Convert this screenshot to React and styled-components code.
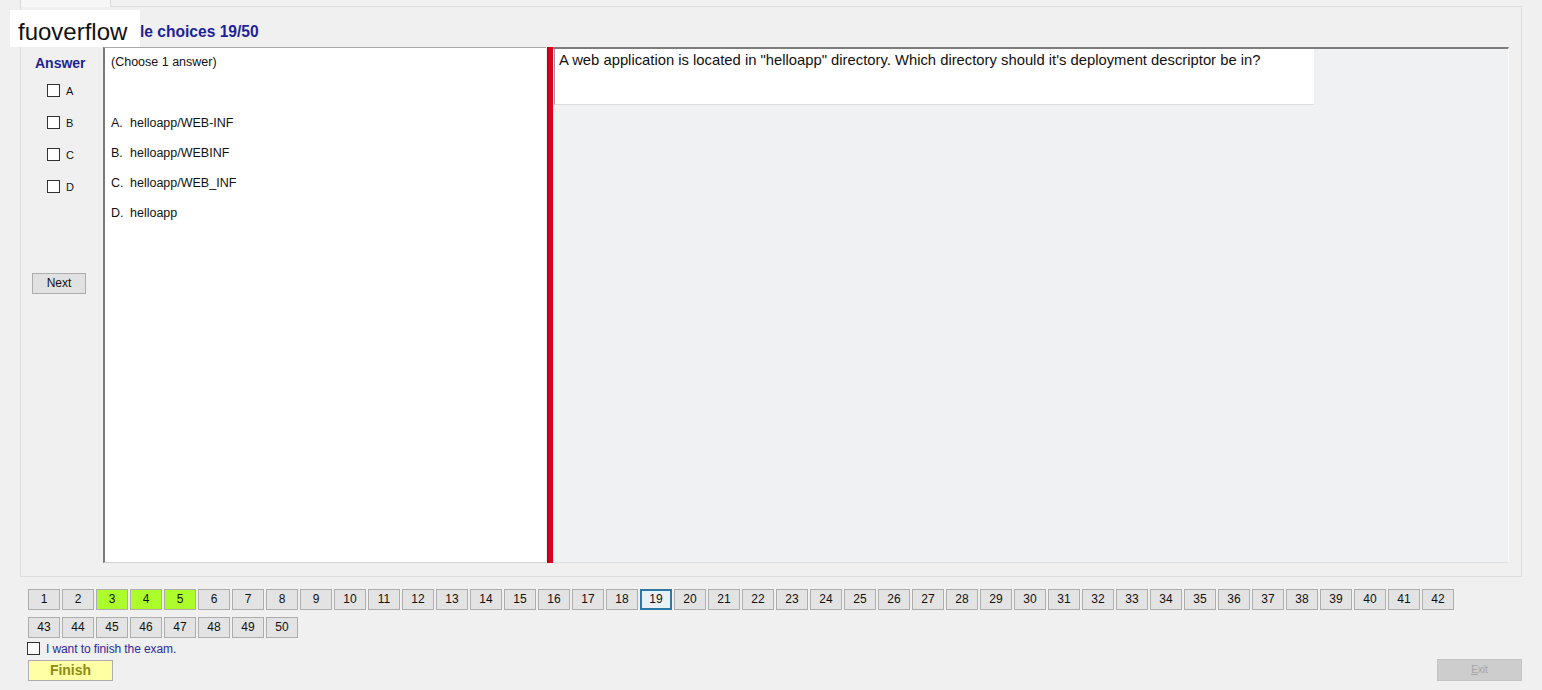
import React from "react"
import styled, { createGlobalStyle } from "styled-components"

const GlobalStyle = createGlobalStyle`
  html, body {
    margin: 0;
    padding: 0;
    background: #f0f0f0;
  }
  body {
    font-family: "Liberation Sans", Arial, sans-serif;
  }
`

const options = [
  { key: "A", text: "helloapp/WEB-INF" },
  { key: "B", text: "helloapp/WEBINF" },
  { key: "C", text: "helloapp/WEB_INF" },
  { key: "D", text: "helloapp" },
]

const done = [3, 4, 5]
const current = 19
const rows = [
  Array.from({ length: 42 }, (_, i) => i + 1),
  Array.from({ length: 8 }, (_, i) => i + 43),
]

const App = () => {
  return (
    <Window>
      <GlobalStyle />
      <TabStrip>
        <Tab />
        <TabRest />
      </TabStrip>
      <Panel>
        <Title>Multiple choices 19/50</Title>
        <Body>
          <LeftCol>
            <AnswerLabel>Answer</AnswerLabel>
            {options.map((o) => (
              <CheckRow key={o.key}>
                <Box />
                <span>{o.key}</span>
              </CheckRow>
            ))}
            <NextButton>Next</NextButton>
          </LeftCol>
          <AnswerPane>
            <Hint>(Choose 1 answer)</Hint>
            {options.map((o) => (
              <Option key={o.key}>
                <span>{o.key}.</span>
                {o.text}
              </Option>
            ))}
          </AnswerPane>
          <Splitter />
          <QuestionPane>
            <QuestionBox>
              A web application is located in "helloapp" directory. Which directory should it's deployment descriptor be in?
            </QuestionBox>
          </QuestionPane>
        </Body>
      </Panel>
      <Nav>
        {rows.map((row, r) => (
          <NavRow key={r}>
            {row.map((n) => (
              <NumButton
                key={n}
                $done={done.includes(n)}
                $current={n === current}
              >
                {n}
              </NumButton>
            ))}
          </NavRow>
        ))}
        <FinishCheck>
          <Box />
          <span>I want to finish the exam.</span>
        </FinishCheck>
        <Footer>
          <FinishButton>Finish</FinishButton>
          <ExitButton>
            <u>E</u>xit
          </ExitButton>
        </Footer>
      </Nav>
      <Watermark>fuoverflow</Watermark>
    </Window>
  )
}

export default App

const Window = styled.div`
  position: relative;
  width: 1542px;
  height: 690px;
  background: #f0f0f0;
  overflow: hidden;
`

const TabStrip = styled.div`
  display: flex;
  margin-left: 20px;
  width: 1502px;
  height: 7px;
`

const Tab = styled.div`
  width: 89px;
  border-left: 1px solid #d9d9d9;
  border-right: 1px solid #d9d9d9;
  background: #f7f7f7;
`

const TabRest = styled.div`
  flex: 1;
  border-bottom: 1px solid #dcdcdc;
`

const Panel = styled.div`
  box-sizing: border-box;
  margin-left: 20px;
  width: 1502px;
  height: 570px;
  padding: 17px 12px 0 0;
  border: 1px solid #dcdcdc;
  border-top: none;
  background: #f0f0f0;
`

const Title = styled.div`
  height: 16px;
  margin-left: 73px;
  font-size: 15.6px;
  line-height: 16px;
  font-weight: bold;
  color: #1f1f9c;
`

const Body = styled.div`
  display: flex;
  margin-top: 7px;
  height: 516px;
`

const LeftCol = styled.div`
  width: 82px;
  display: flex;
  flex-direction: column;
  align-items: flex-start;
`

const AnswerLabel = styled.div`
  margin: 8px 0 0 14px;
  font-size: 14px;
  line-height: 16px;
  font-weight: bold;
  color: #1f1f9c;
`

const Box = styled.span`
  display: inline-block;
  box-sizing: border-box;
  width: 13px;
  height: 13px;
  border: 1px solid #333;
  background: #fff;
`

const CheckRow = styled.div`
  display: flex;
  align-items: center;
  gap: 6px;
  margin-left: 26px;
  height: 13px;
  margin-top: 19px;
  font-size: 11px;
  color: #111;
  &:nth-of-type(2) {
    margin-top: 13px;
  }
`

const NextButton = styled.div`
  box-sizing: border-box;
  margin: 80px 0 0 11px;
  width: 54px;
  height: 21px;
  border: 1px solid #adadad;
  background: #e1e1e1;
  font-size: 12px;
  line-height: 19px;
  text-align: center;
  color: #111;
`

const AnswerPane = styled.div`
  box-sizing: border-box;
  width: 443px;
  padding: 6px 0 0 6px;
  background: #fff;
  border-left: 2px solid #7a7a7a;
  border-top: 1px solid #a9a9a9;
  border-bottom: 1px solid #d0d0d0;
`

const Hint = styled.div`
  font-size: 12.5px;
  line-height: 16px;
  color: #111;
  margin-bottom: 45px;
`

const Option = styled.div`
  font-size: 12.5px;
  line-height: 16px;
  color: #111;
  height: 30px;
  span {
    display: inline-block;
    width: 19px;
  }
`

const Splitter = styled.div`
  width: 6px;
  margin-left: 1px;
  background: #d8001c;
  border-left: 1px solid #a80014;
  box-sizing: border-box;
`

const QuestionPane = styled.div`
  flex: 1;
  background: #eff1f2;
  border-top: 2px solid #7d7d7d;
  border-right: 1px solid #fafafa;
  border-bottom: 1px solid #e0e0e0;
`

const QuestionBox = styled.div`
  box-sizing: border-box;
  width: 760px;
  height: 56px;
  margin-left: 1px;
  padding: 2px 0 0 4px;
  background: #fff;
  border-left: 1px solid #9a9a9a;
  border-bottom: 1px solid #dcdcdc;
  font-size: 14.8px;
  line-height: 18px;
  color: #111;
`

const Nav = styled.div`
  padding: 12px 20px 0 27px;
`

const NavRow = styled.div`
  display: flex;
  gap: 2px;
  margin-left: 1px;
  margin-bottom: 7px;
`

const NumButton = styled.div`
  box-sizing: border-box;
  width: 32px;
  height: 21px;
  font-size: 12px;
  text-align: center;
  color: #111;
  border: ${({ $current }) =>
    $current ? "2px solid #2b78a8" : "1px solid #adadad"};
  line-height: ${({ $current }) => ($current ? "17px" : "19px")};
  background: ${({ $done, $current }) =>
    $done ? "#adfc2c" : $current ? "#e8f2f6" : "#e3e3e3"};
`

const FinishCheck = styled.div`
  display: flex;
  align-items: center;
  gap: 6px;
  margin-top: -4px;
  height: 15px;
  font-size: 12px;
  color: #2b2b9c;
  span {
    letter-spacing: -0.1px;
  }
`

const Footer = styled.div`
  display: flex;
  justify-content: space-between;
  align-items: flex-start;
  margin-top: 3px;
`

const FinishButton = styled.div`
  box-sizing: border-box;
  margin: 1px 0 0 1px;
  width: 85px;
  height: 21px;
  border: 1px solid #adadad;
  background: #ffffa6;
  font-size: 14px;
  line-height: 19px;
  font-weight: bold;
  text-align: center;
  color: #8c8c14;
`

const ExitButton = styled.div`
  box-sizing: border-box;
  width: 85px;
  height: 22px;
  border: 1px solid #c4c4c4;
  background: #cdcdcd;
  font-size: 10px;
  line-height: 20px;
  text-align: center;
  color: #a5a5a5;
`

const Watermark = styled.div`
  position: absolute;
  left: 10px;
  top: 10px;
  width: 130px;
  height: 37px;
  box-sizing: border-box;
  padding-left: 8px;
  background: #fff;
  font-size: 24px;
  line-height: 43px;
  color: #111;
  overflow: hidden;
`
